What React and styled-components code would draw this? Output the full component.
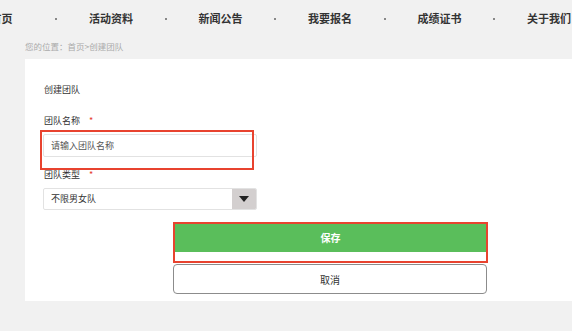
import React from 'react';
import styled, { createGlobalStyle } from 'styled-components';

const GlobalStyle = createGlobalStyle`
  html, body {
    margin: 0;
    padding: 0;
    background: #f1f1f1;
    overflow: hidden;
  }
  body {
    font-family: "Noto Sans CJK SC", "Noto Sans", sans-serif;
    color: #333;
  }
`;

const Page = styled.div`
  width: 572px;
  height: 331px;
  overflow: hidden;
  background: #f1f1f1;
`;

const Nav = styled.nav`
  display: flex;
  align-items: center;
  height: 36px;
  margin-left: -38.5px;
`;

const NavItem = styled.div`
  flex: 0 0 80px;
  text-align: center;
  font-size: 11px;
  font-weight: 700;
  color: #333;
  white-space: nowrap;
`;

const NavDot = styled.span`
  flex: 0 0 29.5px;
  display: flex;
  justify-content: center;
  &::before {
    content: '';
    width: 2px;
    height: 2px;
    margin-top: 2px;
    background: #888;
  }
`;

const Crumb = styled.div`
  height: 23px;
  line-height: 20px;
  padding-left: 25px;
  font-size: 8.5px;
  color: #aaa;
`;

const Card = styled.main`
  margin-left: 25px;
  height: 242px;
  background: #fff;
  padding: 26px 0 0 18px;
  box-sizing: border-box;
`;

const Title = styled.div`
  font-size: 9px;
  color: #333;
  height: 10px;
  line-height: 10px;
  margin-left: 1px;
`;

const Label = styled.div`
  margin: ${(p) => p.$top}px 0 0 1px;
  font-size: 9px;
  line-height: 10px;
  color: #333;
  display: flex;
  gap: 9px;
`;

const Required = styled.span`
  color: #e53b2c;
  font-size: 9px;
`;

const Field = styled.div`
  position: relative;
  width: 214px;
  margin-top: ${(p) => p.$top}px;
`;

const Input = styled.input`
  display: block;
  width: 100%;
  height: 23px;
  box-sizing: border-box;
  border: 1px solid #e2e2e2;
  border-radius: 2px;
  padding: 0 7px;
  font-family: inherit;
  font-size: 9px;
  color: #333;
  outline: none;
  &::placeholder {
    color: #555;
  }
`;

const Highlight = styled.div`
  position: absolute;
  left: -3px;
  top: -4px;
  width: ${(p) => p.$w}px;
  height: ${(p) => p.$h}px;
  border: 2px solid #e8432f;
  box-sizing: border-box;
  pointer-events: none;
`;

const Select = styled.div`
  display: flex;
  height: 22px;
  border: 1px solid #e2e2e2;
  border-radius: 2px;
  box-sizing: border-box;
  overflow: hidden;
`;

const SelectValue = styled.div`
  flex: 1;
  padding-left: 7px;
  font-size: 9px;
  line-height: 20px;
  color: #333;
`;

const SelectArrow = styled.div`
  flex: 0 0 24px;
  background: #d3cfcf;
  display: flex;
  align-items: center;
  justify-content: center;
  &::before {
    content: '';
    border-left: 5px solid transparent;
    border-right: 5px solid transparent;
    border-top: 6px solid #222;
  }
`;

const Actions = styled.div`
  display: flex;
  flex-direction: column;
  width: 315px;
  margin: 12px 0 0 130px;
`;

const SaveFrame = styled.div`
  position: relative;
  height: 41px;
`;

const SaveButton = styled.button`
  display: block;
  width: 311px;
  height: 29px;
  margin: 1px 0 0 2px;
  border: none;
  background: #5abe5b;
  color: #fff;
  font-family: inherit;
  font-size: 10px;
  font-weight: 700;
`;

const CancelButton = styled.button`
  display: block;
  width: 314px;
  height: 30px;
  margin-top: 1px;
  background: #fff;
  border: 1px solid #8c8c8c;
  border-radius: 4px;
  color: #333;
  font-family: inherit;
  font-size: 10px;
`;

const navItems = ['首页', '活动资料', '新闻公告', '我要报名', '成绩证书', '关于我们'];

export default function App() {
  return (
    <Page>
      <GlobalStyle />
      <Nav>
        {navItems.map((item, i) => (
          <React.Fragment key={item}>
            {i > 0 && <NavDot />}
            <NavItem>{item}</NavItem>
          </React.Fragment>
        ))}
      </Nav>
      <Crumb>您的位置：首页&gt;创建团队</Crumb>
      <Card>
        <Title>创建团队</Title>
        <Label $top={21}>
          团队名称<Required>*</Required>
        </Label>
        <Field $top={8}>
          <Input placeholder="请输入团队名称" />
          <Highlight $w={214} $h={40} />
        </Field>
        <Label $top={13}>
          团队类型<Required>*</Required>
        </Label>
        <Field $top={8}>
          <Select>
            <SelectValue>不限男女队</SelectValue>
            <SelectArrow />
          </Select>
        </Field>
        <Actions>
          <SaveFrame>
            <SaveButton>保存</SaveButton>
            <Highlight $w={315} $h={41} style={{ left: 0, top: 0 }} />
          </SaveFrame>
          <CancelButton>取消</CancelButton>
        </Actions>
      </Card>
    </Page>
  );
}
